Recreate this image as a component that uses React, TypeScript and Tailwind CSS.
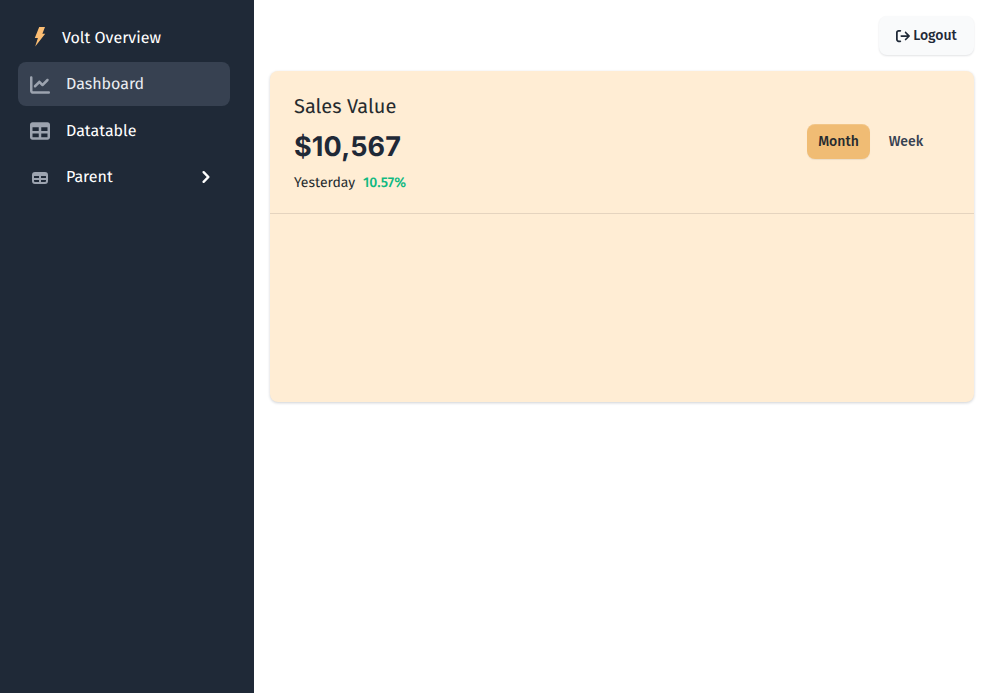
import type { ReactNode } from "react";
import { FaChartLine, FaTable, FaArrowRightFromBracket } from "react-icons/fa6";
import { HiTable, HiChevronRight } from "react-icons/hi";

type NavItemProps = { icon: ReactNode; label: string; active?: boolean; expandable?: boolean };

function NavItem({ icon, label, active, expandable }: NavItemProps) {
  return (
    <li className={`flex h-11 items-center rounded-lg pl-3 pr-3 ${active ? "bg-[#374151] text-[#eaedf2]" : "text-white"}`}>
      <span className="flex w-5 shrink-0 justify-center pt-[1.7px] text-[#9ca3af]">{icon}</span>
      <span className="ml-4 flex-1 pt-0.5 text-[16px] leading-6">{label}</span>
      {expandable && <HiChevronRight className="size-6 text-white" />}
    </li>
  );
}

function Sidebar() {
  return (
    <nav className="w-[254px] shrink-0 bg-[#1f2937] px-[18px] pr-6 pt-[15px]">
      <div className="flex h-11 items-center pl-3 text-white">
        <svg viewBox="0 0 20 20" className="size-5 shrink-0" fill="#fbbd73">
          <path d="M9.2 0H15l-2.6 6.8H15.2L5.2 19.6 7.9 11H4.8z" />
        </svg>
        <span className="ml-3 pt-1 text-[16px] leading-6">Volt Overview</span>
      </div>
      <ul className="mt-[3px] flex flex-col gap-[2.5px]">
        <NavItem active icon={<FaChartLine className="size-5" />} label="Dashboard" />
        <NavItem icon={<FaTable className="size-5" />} label="Datatable" />
        <NavItem expandable icon={<HiTable className="size-5" />} label="Parent" />
      </ul>
    </nav>
  );
}

function SalesCard() {
  return (
    <section className="h-[331px] rounded-lg bg-orange-100 shadow-[0_1px_3px_rgba(17,24,39,0.2)]">
      <header className="flex h-[143px] justify-between border-b border-[#e5d4bf] px-6 pt-[23px]">
        <div>
          <h2 className="text-[20px] leading-[26px] text-[#262b2f]">Sales Value</h2>
          <p className="mt-2 font-[Inter] text-[27px] font-bold leading-[38px] tracking-[0.15px] text-[#1f2937]">$10,567</p>
          <p className="mt-[7px] flex text-[14px] leading-5 text-[#262b2f]">
            <span className="w-[69px]">Yesterday</span>
            <span className="font-medium text-[#10b981]">10.57%</span>
          </p>
        </div>
        <div className="mr-4 mt-[30px] flex h-[35px] text-[14px] font-medium">
          <button className="w-[63px] rounded-lg bg-[#f0bc74] text-[#262b2f] shadow-[inset_0_1px_0_rgba(255,255,255,0.15),0_1px_1px_rgba(17,24,39,0.075)]">Month</button>
          <button className="ml-2 w-14 text-[#374151]">Week</button>
        </div>
      </header>
    </section>
  );
}

export default function App() {
  return (
    <div className="flex h-screen overflow-hidden bg-white font-['Fira_Sans','Noto_Sans',sans-serif] [text-rendering:geometricPrecision]">
      <Sidebar />
      <main className="flex-1 pl-4 pr-3 pt-4">
        <div className="mb-4 flex justify-end">
          <button className="flex h-[39px] w-[95px] items-center justify-center gap-[3px] rounded-lg bg-[#f9fafb] text-[14px] font-medium text-[#1f2937] shadow-[0_1px_2px_rgba(17,24,39,0.12)]">
            <FaArrowRightFromBracket className="size-[14px]" />
            <span>Logout</span>
          </button>
        </div>
        <SalesCard />
      </main>
    </div>
  );
}
